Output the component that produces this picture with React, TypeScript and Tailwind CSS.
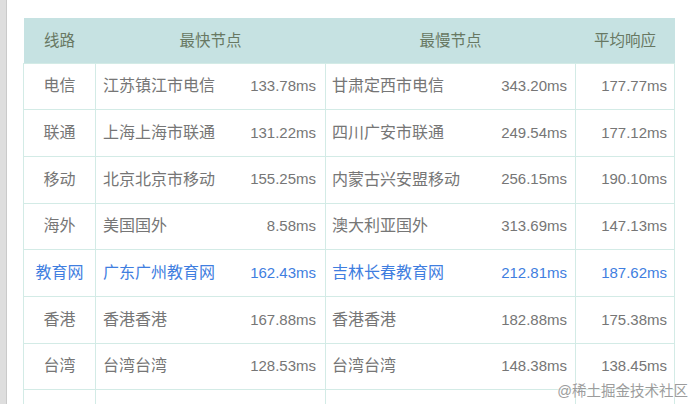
import React from "react"

type Row = {
  line: string
  fastName: string
  fastMs: string
  slowName: string
  slowMs: string
  avg: string
  edu?: boolean
}

const rows: Row[] = [
  { line: "电信", fastName: "江苏镇江市电信", fastMs: "133.78ms", slowName: "甘肃定西市电信", slowMs: "343.20ms", avg: "177.77ms" },
  { line: "联通", fastName: "上海上海市联通", fastMs: "131.22ms", slowName: "四川广安市联通", slowMs: "249.54ms", avg: "177.12ms" },
  { line: "移动", fastName: "北京北京市移动", fastMs: "155.25ms", slowName: "内蒙古兴安盟移动", slowMs: "256.15ms", avg: "190.10ms" },
  { line: "海外", fastName: "美国国外", fastMs: "8.58ms", slowName: "澳大利亚国外", slowMs: "313.69ms", avg: "147.13ms" },
  { line: "教育网", fastName: "广东广州教育网", fastMs: "162.43ms", slowName: "吉林长春教育网", slowMs: "212.81ms", avg: "187.62ms", edu: true },
  { line: "香港", fastName: "香港香港", fastMs: "167.88ms", slowName: "香港香港", slowMs: "182.88ms", avg: "175.38ms" },
  { line: "台湾", fastName: "台湾台湾", fastMs: "128.53ms", slowName: "台湾台湾", slowMs: "148.38ms", avg: "138.45ms" },
  { line: "", fastName: "", fastMs: "", slowName: "", slowMs: "", avg: "" },
]

const font = { fontFamily: '"Liberation Sans", "Noto Sans CJK SC", sans-serif' }

export default function App() {
  return (
    <div className="relative flex h-[404px] w-[692px] overflow-hidden bg-white" style={font}>
      {/* side strip */}
      <div className="w-[7px] shrink-0 border-r border-[#cacaca] bg-[#dedede]" />

      <div className="pl-[16px] pt-[18px]">
        <table className="w-[651px] table-fixed border-collapse">
          <colgroup>
            <col className="w-[72px]" />
            <col className="w-[136px]" />
            <col className="w-[94px]" />
            <col className="w-[146px]" />
            <col className="w-[104px]" />
            <col className="w-[99px]" />
          </colgroup>
          <thead>
            <tr className="h-[45px] bg-[#c6e2e2] text-[15.5px] text-[#687862]">
              <th className="font-normal">线路</th>
              <th colSpan={2} className="font-normal">最快节点</th>
              <th colSpan={2} className="font-normal">最慢节点</th>
              <th className="font-normal">平均响应</th>
            </tr>
          </thead>
          <tbody>
            {rows.map((r, i) => {
              const color = r.edu ? "text-[#3f7ee0]" : "text-[#767676]"
              return (
                <tr key={i} className={`h-[46.7px] ${color}`}>
                  <td className="border border-[#d3ebe6] text-center text-[16px]">{r.line}</td>
                  <td className="border-y border-l border-[#d3ebe6] pl-[7px] text-[16px]">{r.fastName}</td>
                  <td className="border-y border-r border-[#d3ebe6] pr-[9px] text-right text-[15px]">{r.fastMs}</td>
                  <td className="border-y border-l border-[#d3ebe6] pl-[6px] text-[16px]">{r.slowName}</td>
                  <td className="border-y border-r border-[#d3ebe6] pr-[8px] text-right text-[15px]">{r.slowMs}</td>
                  <td className="border border-[#d3ebe6] pr-[7px] text-right text-[15px]">{r.avg}</td>
                </tr>
              )
            })}
          </tbody>
        </table>
      </div>

      {/* watermark */}
      <div
        className="absolute right-[4px] top-[381px] text-[14.5px] text-[#9c9c9c]"
        style={{ textShadow: "0 0 2px #fff, 0 0 2px #fff" }}
      >
        @稀土掘金技术社区
      </div>
    </div>
  )
}
